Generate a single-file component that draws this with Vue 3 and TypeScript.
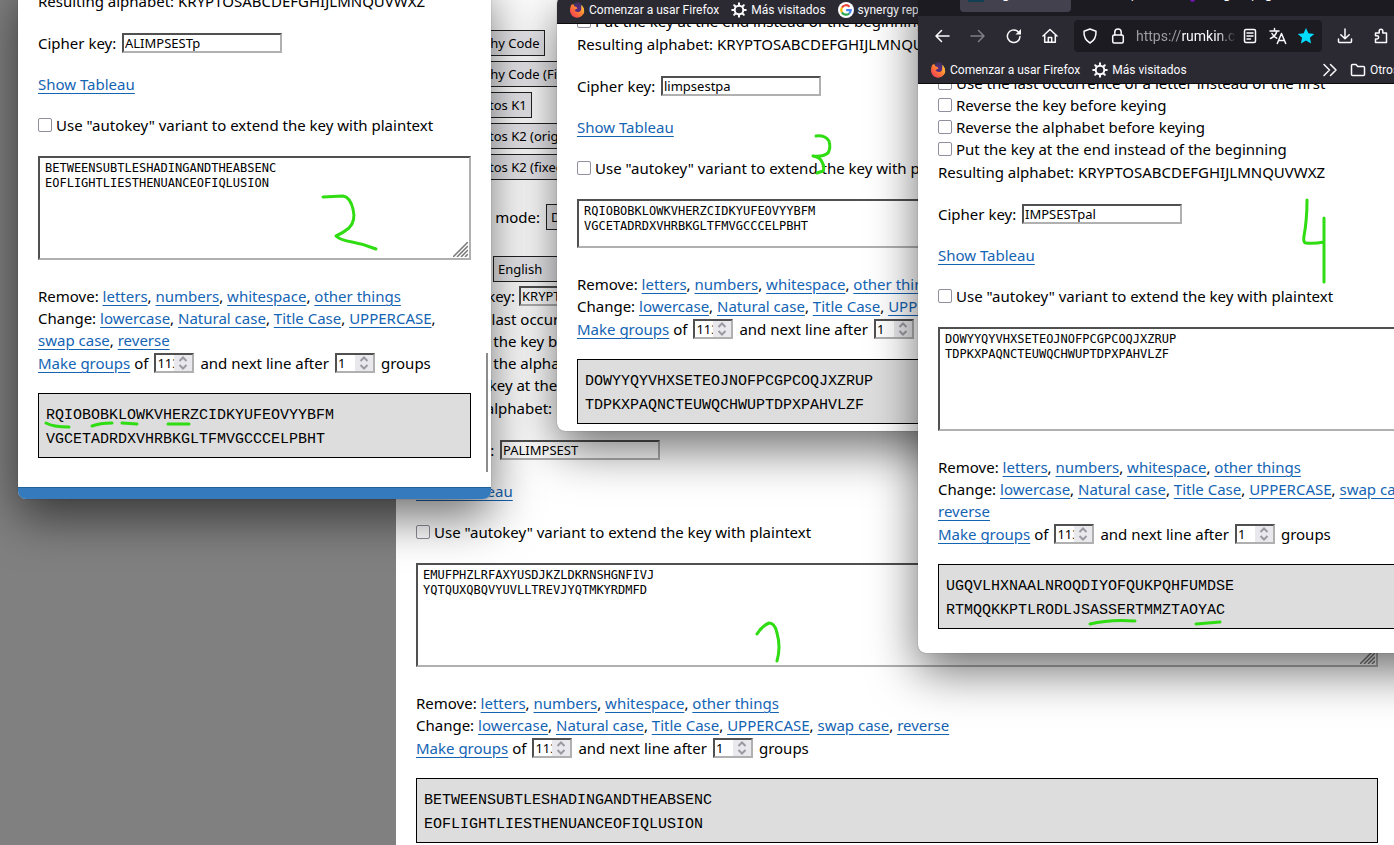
<script setup lang="ts">
import { reactive } from 'vue'

interface CipherWindow {
  id: string
  browser: 'none' | 'bookmarks' | 'full'
  presets: boolean
  alphabetKey: string
  cipherKey: string
  input: string
  output: string[]
}

const alphabet = 'KRYPTOSABCDEFGHIJLMNQUVWXZ'

const windows = reactive<CipherWindow[]>([
  {
    id: 'one',
    browser: 'none',
    presets: true,
    alphabetKey: 'KRYPTOS',
    cipherKey: 'PALIMPSEST',
    input: 'EMUFPHZLRFAXYUSDJKZLDKRNSHGNFIVJ\nYQTQUXQBQVYUVLLTREVJYQTMKYRDMFD',
    output: ['BETWEENSUBTLESHADINGANDTHEABSENC', 'EOFLIGHTLIESTHENUANCEOFIQLUSION'],
  },
  {
    id: 'three',
    browser: 'bookmarks',
    presets: false,
    alphabetKey: 'KRYPTOS',
    cipherKey: 'limpsestpa',
    input: 'RQIOBOBKLOWKVHERZCIDKYUFEOVYYBFM\nVGCETADRDXVHRBKGLTFMVGCCCELPBHT',
    output: ['DOWYYQYVHXSETEOJNOFPCGPCOQJXZRUP', 'TDPKXPAQNCTEUWQCHWUPTDPXPAHVLZF'],
  },
  {
    id: 'two',
    browser: 'none',
    presets: false,
    alphabetKey: 'KRYPTOS',
    cipherKey: 'ALIMPSESTp',
    input: 'BETWEENSUBTLESHADINGANDTHEABSENC\nEOFLIGHTLIESTHENUANCEOFIQLUSION',
    output: ['RQIOBOBKLOWKVHERZCIDKYUFEOVYYBFM', 'VGCETADRDXVHRBKGLTFMVGCCCELPBHT'],
  },
  {
    id: 'four',
    browser: 'full',
    presets: false,
    alphabetKey: 'KRYPTOS',
    cipherKey: 'IMPSESTpal',
    input: 'DOWYYQYVHXSETEOJNOFPCGPCOQJXZRUP\nTDPKXPAQNCTEUWQCHWUPTDPXPAHVLZF',
    output: ['UGQVLHXNAALNROQDIYOFQUKPQHFUMDSE', 'RTMQQKKPTLRODLJSASSERTMMZTAOYAC'],
  },
])

const codePresets = ['Cryptography Code', 'Cryptography Code (Fixed)']
const kryptosPresets = ['Kryptos K1', 'Kryptos K2 (original)', 'Kryptos K2 (fixed)']
const keyOptions = [
  'Use the last occurrence of a letter instead of the first',
  'Reverse the key before keying',
  'Reverse the alphabet before keying',
  'Put the key at the end instead of the beginning',
]
const removeLinks = ['letters', 'numbers', 'whitespace', 'other things']
const changeLinks = ['lowercase', 'Natural case', 'Title Case', 'UPPERCASE', 'swap case', 'reverse']
</script>

<template>
  <main class="desktop">
    <section v-for="w in windows" :key="w.id" class="window" :class="'window-' + w.id">
      <div v-if="w.browser === 'full'" class="tabs">
        <div class="tab"><span class="favicon"></span>Vigenère</div>
        <div class="tab plain">Caesar, cipher</div>
        <div class="tab plain"><span class="dot"></span>Tangled pages</div>
      </div>
      <nav v-if="w.browser === 'full'" class="toolbar">
        <button class="tool" aria-label="Back">
          <svg width="16" height="16" viewBox="0 0 16 16"><path d="M15 8H2M7.500 2.500L2 8l5.500 5.500" /></svg>
        </button>
        <button class="tool dim" aria-label="Forward">
          <svg width="16" height="16" viewBox="0 0 16 16"><path d="M1 8h13M8.500 2.500L14 8l-5.500 5.500" /></svg>
        </button>
        <button class="tool" aria-label="Reload">
          <svg width="16" height="16" viewBox="0 0 16 16"><path d="M14 8.500A6.300 6.300 0 1 1 11.500 3.200L14 5.500" /><path d="M15 1v5.500H9.500z" class="solid" /></svg>
        </button>
        <button class="tool" aria-label="Home">
          <svg width="16" height="16" viewBox="0 0 16 16"><path d="M1 8l7-6.500L15 8M2.700 7v7.300h10.600V7M6.300 14V9.500h3.400V14" /></svg>
        </button>
        <div class="urlbar">
          <span class="slot"><svg width="16" height="16" viewBox="0 0 16 16"><path d="M8 1l6 2.300c.3 5.500-1.500 9.200-6 11.700-4.500-2.500-6.300-6.200-6-11.700z" /></svg></span>
          <span class="slot"><svg width="16" height="16" viewBox="0 0 16 16"><rect x="2.700" y="7" width="10.600" height="8" rx="1.500" /><path d="M4.800 7V4.200a3.200 3.200 0 0 1 6.400 0V7" /></svg></span>
          <span class="url" role="textbox" aria-label="Address"><span class="scheme">https://</span>rumkin.com</span>
          <span class="slot"><svg width="16" height="16" viewBox="0 0 16 16"><rect x="2.500" y="1.500" width="11" height="13" rx="1.500" /><path d="M5 5h6M5 8h6M5 11h3.500" /></svg></span>
          <span class="slot"><svg width="18" height="18" viewBox="0 0 18 18"><path d="M1 4h9M5.500 1.500V4M8 4c-.8 3-3 5.800-6.500 7.500M3 6.500c1 2 2.500 3.500 4.700 4.700" /><path d="M8.300 16.500L12.500 6.500l4.200 10M9.800 13.500h5.400" /></svg></span>
          <span class="slot"><svg width="18" height="18" viewBox="0 0 18 18"><path d="M9 1l2.400 5.300 5.800.6-4.300 3.900 1.200 5.700L9 13.600l-5.100 2.900 1.200-5.700L.8 6.900l5.800-.6z" class="star" /></svg></span>
        </div>
        <button class="tool" aria-label="Downloads">
          <svg width="16" height="16" viewBox="0 0 16 16"><path d="M8 1v9.500M3.800 6.700L8 10.800l4.200-4.100M1.500 11v2.500q0 1 1 1h11q1 0 1-1V11" /></svg>
        </button>
        <button class="tool" aria-label="Extensions">
          <svg width="16" height="16" viewBox="0 0 16 16"><path d="M2.500 5h3.700V3a1.700 1.700 0 0 1 3.600 0v2H13.500v9.500H2.500V11H4a1.600 1.600 0 0 0 0-3.300H2.500z" /></svg>
        </button>
        <button class="tool" aria-label="Account"></button>
        <button class="tool" aria-label="Menu"></button>
      </nav>
      <nav v-if="w.browser !== 'none'" class="bookmarks">
        <a href="#" class="bookmark">
          <svg class="logo" width="16" height="16" viewBox="0 0 16 16">
            <defs>
              <linearGradient :id="'flame-' + w.id" x1="1" y1="0" x2="0" y2="1">
                <stop offset="0" stop-color="#ffe23d" />
                <stop offset="0.5" stop-color="#ff7a35" />
                <stop offset="1" stop-color="#f0305c" />
              </linearGradient>
            </defs>
            <circle cx="8" cy="8.500" r="7" :fill="'url(#flame-' + w.id + ')'" />
            <path d="M5 1.500Q8-1 12 1.500L13 5 8 7 5 4z" fill="#42325f" />
            <circle cx="8.500" cy="7" r="4" fill="#542a7d" />
            <path d="M1.500 8Q1 3 3.500 2q0 2 2.500 2.500Q8 5 8.500 6.500L5.500 8Q7 11 11 9.500 13.500 7 12 3q4 4 3 8-3 5-8 4.500-5-1-5.500-7.500z" :fill="'url(#flame-' + w.id + ')'" />
          </svg>
          Comenzar a usar Firefox
        </a>
        <a href="#" class="bookmark">
          <svg width="16" height="16" viewBox="0 0 16 16"><circle cx="8" cy="8" r="4.300" class="ring" /><path d="M8 1.200v1.500M8 13.300v1.500M1.200 8h1.500M13.300 8h1.500M3.200 3.200l1.100 1.100M11.700 11.700l1.100 1.100M12.800 3.200l-1.100 1.100M4.300 11.700l-1.100 1.100" class="ring" /></svg>
          Más visitados
        </a>
        <a v-if="w.browser === 'bookmarks'" href="#" class="bookmark">
          <svg class="logo" width="16" height="16" viewBox="0 0 16 16">
            <circle cx="8" cy="8" r="8" fill="#fff" />
            <g fill="none" stroke-width="2.200">
              <path d="M11.500 4.700A4.800 4.800 0 0 0 3.900 5.600" stroke="#ea4335" />
              <path d="M3.900 5.600a4.800 4.800 0 0 0 0 4.800" stroke="#fbbc05" />
              <path d="M3.900 10.400a4.800 4.800 0 0 0 7.300 1.100" stroke="#34a853" />
              <path d="M11.200 11.500A4.800 4.800 0 0 0 12.700 8.200H8.200" stroke="#4285f4" />
            </g>
          </svg>
          synergy repository
        </a>
        <template v-if="w.browser === 'full'">
          <button class="more" aria-label="More bookmarks">
            <svg width="16" height="16" viewBox="0 0 16 16"><path d="M2 2.500L7.500 8 2 13.500M8.500 2.500L14 8l-5.500 5.500" /></svg>
          </button>
          <a href="#" class="bookmark other">
            <svg width="16" height="16" viewBox="0 0 16 16"><path d="M1.500 3.500q0-1 1-1H6l1.700 2h5.800q1 0 1 1v7q0 1-1 1h-11q-1 0-1-1z" /></svg>
            Otros marcadores
          </a>
        </template>
      </nav>

      <div class="viewport">
        <form class="page" @submit.prevent>
          <template v-if="w.presets">
            <div class="presets">
              <div v-for="p in codePresets" :key="p"><button type="button" class="preset">{{ p }}</button></div>
              <div v-for="p in kryptosPresets" :key="p"><button type="button" class="preset short">{{ p }}</button></div>
            </div>
            <div class="mode">
              <label :for="'mode-' + w.id">Operating mode:</label>
              <select :id="'mode-' + w.id"><option>Decrypt</option></select>
            </div>
            <div class="language">
              <label :for="'lang-' + w.id">Alphabet:</label>
              <select :id="'lang-' + w.id"><option>English</option></select>
            </div>
            <div class="alpha-key">
              <label :for="'alpha-' + w.id">Alphabet key:</label>
              <input :id="'alpha-' + w.id" v-model="w.alphabetKey" class="field" type="text" />
            </div>
          </template>
          <div class="options">
            <label v-for="o in keyOptions" :key="o" class="check"><input type="checkbox" />{{ o }}</label>
          </div>
          <div class="line">Resulting alphabet: {{ alphabet }}</div>
          <div class="line cipher">
            <label :for="'key-' + w.id">Cipher key:</label>
            <input :id="'key-' + w.id" v-model="w.cipherKey" class="field" type="text" />
          </div>
          <div class="line tableau"><a href="#">Show Tableau</a></div>
          <label class="check autokey"><input type="checkbox" />Use "autokey" variant to extend the key with plaintext</label>
          <div class="source">
            <textarea v-model="w.input" aria-label="Message" spellcheck="false"></textarea>
            <svg class="grip" width="15" height="15" viewBox="0 0 15 15"><path d="M0 15L15 0M4 15L15 4M8 15l7-7M12 15l3-3" /></svg>
          </div>
          <div class="line">
            Remove: <template v-for="(l, i) in removeLinks" :key="l"><a href="#">{{ l }}</a>{{ i < removeLinks.length - 1 ? ', ' : '' }}</template>
          </div>
          <div class="line">
            Change: <template v-for="(l, i) in changeLinks" :key="l"><a href="#">{{ l }}</a>{{ i < changeLinks.length - 1 ? ', ' : '' }}</template>
          </div>
          <div class="groups">
            <span><a href="#">Make groups</a> of</span>
            <span class="number">
              <input type="number" value="113" aria-label="Group size" />
              <span class="spin"><svg width="10" height="14" viewBox="0 0 10 14"><path d="M1.500 5L5 1.500 8.500 5M1.500 9L5 12.500 8.500 9" /></svg></span>
            </span>
            <span>and next line after</span>
            <span class="number">
              <input type="number" value="1" aria-label="Groups per line" />
              <span class="spin"><svg width="10" height="14" viewBox="0 0 10 14"><path d="M1.500 5L5 1.500 8.500 5M1.500 9L5 12.500 8.500 9" /></svg></span>
            </span>
            <span>groups</span>
          </div>
          <output class="result"><span v-for="o in w.output" :key="o">{{ o }}</span></output>
        </form>
        <span v-if="w.id === 'two'" class="scrollbar"></span>
      </div>
      <div v-if="w.id === 'two'" class="frame-foot"></div>
    </section>

    <svg class="ink" width="1394" height="845" viewBox="0 0 1394 845" aria-hidden="true">
      <path d="M323 197l20-1Q350 197 353 209 356 221 349 228 343 233 336 236 340 240 352 242T376 249" />
      <path d="M816 136q9-1 13 5 2 7-1 12-5 4-15 3 7 1 9 6 3 6 1 9l-6 2" />
      <path d="M1307 200q0 20-3 36-1 7 2 7 8 1 18-1M1324 218v64" />
      <path d="M757 634q5-8 12-11 6 0 8 10 4 14 0 28" />
      <path d="M46 423q7 4 23 4M92 426q8-3 20-3M122 423l15 1M168 424h21" />
      <path d="M1090 624q20-5 45-3M1196 624l24-2" />
    </svg>
  </main>
</template>

<style>
body {
  margin: 0;
  overflow: hidden;
}
</style>

<style scoped>
* {
  box-sizing: border-box;
}
.desktop {
  position: relative;
  height: 100vh;
  overflow: hidden;
  background: #808080;
  color: #000;
  font: 15px/22px "Noto Sans", "Open Sans", sans-serif;
}
.window {
  position: absolute;
  display: flex;
  flex-direction: column;
  overflow: hidden;
  border-radius: 8px;
  background: #fff;
  box-shadow: 0 0 1px rgba(0, 0, 0, 0.6), 0 18px 48px rgba(0, 0, 0, 0.57);
}
.window-one {
  top: 0;
  right: 0;
  bottom: 0;
  left: 396px;
  border-radius: 0;
  box-shadow: none;
}
.window-two {
  top: -20px;
  left: 18px;
  width: 473px;
  height: 519px;
}
.window-three {
  top: -4px;
  left: 557px;
  width: 620px;
  height: 435px;
}
.window-four {
  top: -28px;
  left: 918px;
  width: 560px;
  height: 681px;
}
.viewport {
  position: relative;
  display: flex;
  flex: 1;
  flex-direction: column;
  justify-content: flex-end;
  min-height: 0;
  overflow: hidden;
}
.page {
  display: flex;
  flex-direction: column;
  flex-shrink: 0;
  padding: 0 20px 24px;
}
.window-one .page {
  padding: 0 16px 2px 20px;
}
.window-two .page {
  padding-bottom: 29px;
}
.window-three .page {
  padding-bottom: 7px;
}

a {
  color: #1464b4;
  text-decoration: underline;
  text-underline-offset: 3px;
}
button {
  font: inherit;
}
.presets {
  display: flex;
  flex-direction: column;
  gap: 5px;
  margin-bottom: 24px;
}
.presets div {
  display: flex;
}
.preset,
select {
  height: 26px;
  border: 1px solid #222;
  border-radius: 0;
  background: #e9e9ed;
  color: #000;
  font: 13px/22px "Noto Sans", sans-serif;
  white-space: nowrap;
}
.preset {
  padding: 0 4px;
}
.preset.short {
  padding-left: 44px;
}
select {
  appearance: none;
  width: 120px;
  padding: 0 4px;
}
.mode,
.language,
.alpha-key,
.cipher,
.groups {
  display: flex;
  align-items: center;
  gap: 4px;
}
.mode {
  gap: 6px;
  height: 26px;
  margin-bottom: 24px;
}
.mode label {
  width: 124px;
  text-align: right;
}
.language {
  height: 30px;
}
.language label {
  width: 73px;
}
.alpha-key {
  height: 24px;
}
.alpha-key label {
  width: 99px;
  text-align: right;
}
.cipher label {
  width: 80px;
}
.field {
  width: 160px;
  height: 20px;
  padding: 0 1px;
  border: 2px solid;
  border-color: #505050 #b0b0b0 #b0b0b0 #505050;
  background: #fff;
  color: #000;
  font: 13px/16px "Noto Sans", sans-serif;
}
.options {
  display: flex;
  flex-direction: column;
  margin-bottom: 1px;
}
.check {
  display: flex;
  align-items: center;
  gap: 4px;
  height: 22px;
  white-space: nowrap;
}
.check input {
  appearance: none;
  flex: none;
  width: 14px;
  height: 14px;
  margin: 0 0 1px;
  border: 1px solid #8f8f9d;
  border-radius: 2px;
  background: #fff;
}
.cipher {
  margin-top: 20px;
}
.tableau {
  margin: 19px 0;
}
.source {
  position: relative;
  display: flex;
  height: 104px;
  margin: 20px 0 25px;
}
.window-three .source {
  height: 49px;
}
textarea {
  flex: 1;
  min-width: 0;
  padding: 3px 5px;
  border: 2px solid;
  border-color: #505050 #b0b0b0 #b0b0b0 #505050;
  background: #fff;
  color: #000;
  font: 12px/15px "DejaVu Sans Mono", monospace;
  overflow: hidden;
  resize: none;
}
.grip {
  position: absolute;
  right: 3px;
  bottom: 3px;
  fill: none;
  stroke: #777;
  stroke-width: 1.5;
}
.groups {
  gap: 6px;
  height: 24px;
  margin-bottom: 18px;
}
.number {
  display: flex;
  width: 40px;
  height: 20px;
  border: 2px solid;
  border-color: #505050 #b0b0b0 #b0b0b0 #505050;
  background: #fff;
}
.number input {
  appearance: textfield;
  width: 18px;
  min-width: 0;
  padding: 0 0 0 1px;
  border: 0;
  background: none;
  color: #000;
  font: 13px/16px "Noto Sans", sans-serif;
}
.number input::-webkit-inner-spin-button {
  display: none;
}
.spin {
  display: flex;
  align-items: center;
  justify-content: center;
  width: 18px;
  background: #e9e9ed;
}
.spin svg {
  fill: none;
  stroke: #9a9aa2;
  stroke-width: 2;
}
.result {
  display: flex;
  flex-direction: column;
  padding: 10px 7px 5px;
  border: 1px solid #000;
  background: #ddd;
  font: 15px/24px "Liberation Mono", monospace;
}
.scrollbar {
  position: absolute;
  right: 3px;
  bottom: 15px;
  width: 2px;
  height: 119px;
  background: #8c8c8c;
}
.frame-foot {
  height: 12px;
  border-top: 1px solid #22629b;
  background: #347abd;
}

.tabs {
  display: flex;
  flex: none;
  align-items: center;
  height: 44px;
  padding-left: 42px;
  background: #1c1b22;
}
.tab {
  display: flex;
  align-items: center;
  gap: 8px;
  width: 111px;
  height: 36px;
  padding: 0 8px;
  border-radius: 4px;
  background: #42414d;
  color: #fbfbfe;
  font-size: 12px;
  white-space: nowrap;
}
.tab.plain {
  background: none;
}
.favicon,
.dot {
  width: 16px;
  height: 16px;
  background: #123f52;
}
.dot {
  width: 12px;
  border-radius: 8px;
  background: #7016b0;
}
.toolbar,
.bookmarks {
  display: flex;
  flex: none;
  align-items: center;
  background: #2b2a33;
  color: #fbfbfe;
}
.toolbar {
  gap: 4px;
  height: 40px;
  padding: 0 9px 0 8px;
}
.toolbar svg,
.bookmarks svg:not(.logo) {
  fill: none;
  stroke: #fbfbfe;
  stroke-width: 1.5;
  stroke-linejoin: round;
  stroke-linecap: round;
}
.toolbar .solid {
  fill: #fbfbfe;
  stroke: none;
}
.toolbar .star {
  fill: #00ddff;
  stroke: none;
}
.bookmarks .ring {
  stroke-width: 2;
}
.tool {
  display: flex;
  flex: none;
  align-items: center;
  justify-content: center;
  width: 32px;
  height: 32px;
  padding: 0;
  border: 0;
  background: none;
}
.dim {
  opacity: 0.4;
}
.urlbar {
  display: flex;
  flex: 1;
  align-items: center;
  min-width: 0;
  height: 32px;
  margin: 0 3px 0 4px;
  padding: 0 2px;
  border-radius: 4px;
  background: #1c1b22;
}
.slot {
  display: flex;
  flex: none;
  align-items: center;
  justify-content: center;
  width: 28px;
}
.url {
  flex: 1;
  min-width: 0;
  margin-left: 4px;
  overflow: hidden;
  font-family: Roboto, sans-serif;
  font-size: 14px;
  white-space: nowrap;
  mask-image: linear-gradient(to right, #000 80%, transparent);
}
.scheme {
  color: #9d9da3;
}
.bookmarks {
  gap: 12px;
  height: 28px;
  padding: 0 12px;
  border-bottom: 1px solid #0c0c0d;
}
.bookmark {
  display: flex;
  flex: none;
  align-items: center;
  gap: 4px;
  color: #fbfbfe;
  font-family: Roboto, sans-serif;
  font-size: 12px;
  text-decoration: none;
  white-space: nowrap;
}
.more {
  display: flex;
  margin-left: auto;
  padding: 0;
  border: 0;
  background: none;
}
.ink {
  position: absolute;
  top: 0;
  left: 0;
  pointer-events: none;
  fill: none;
  stroke: #30dc12;
  stroke-width: 3;
  stroke-linecap: round;
  stroke-linejoin: round;
}
</style>
